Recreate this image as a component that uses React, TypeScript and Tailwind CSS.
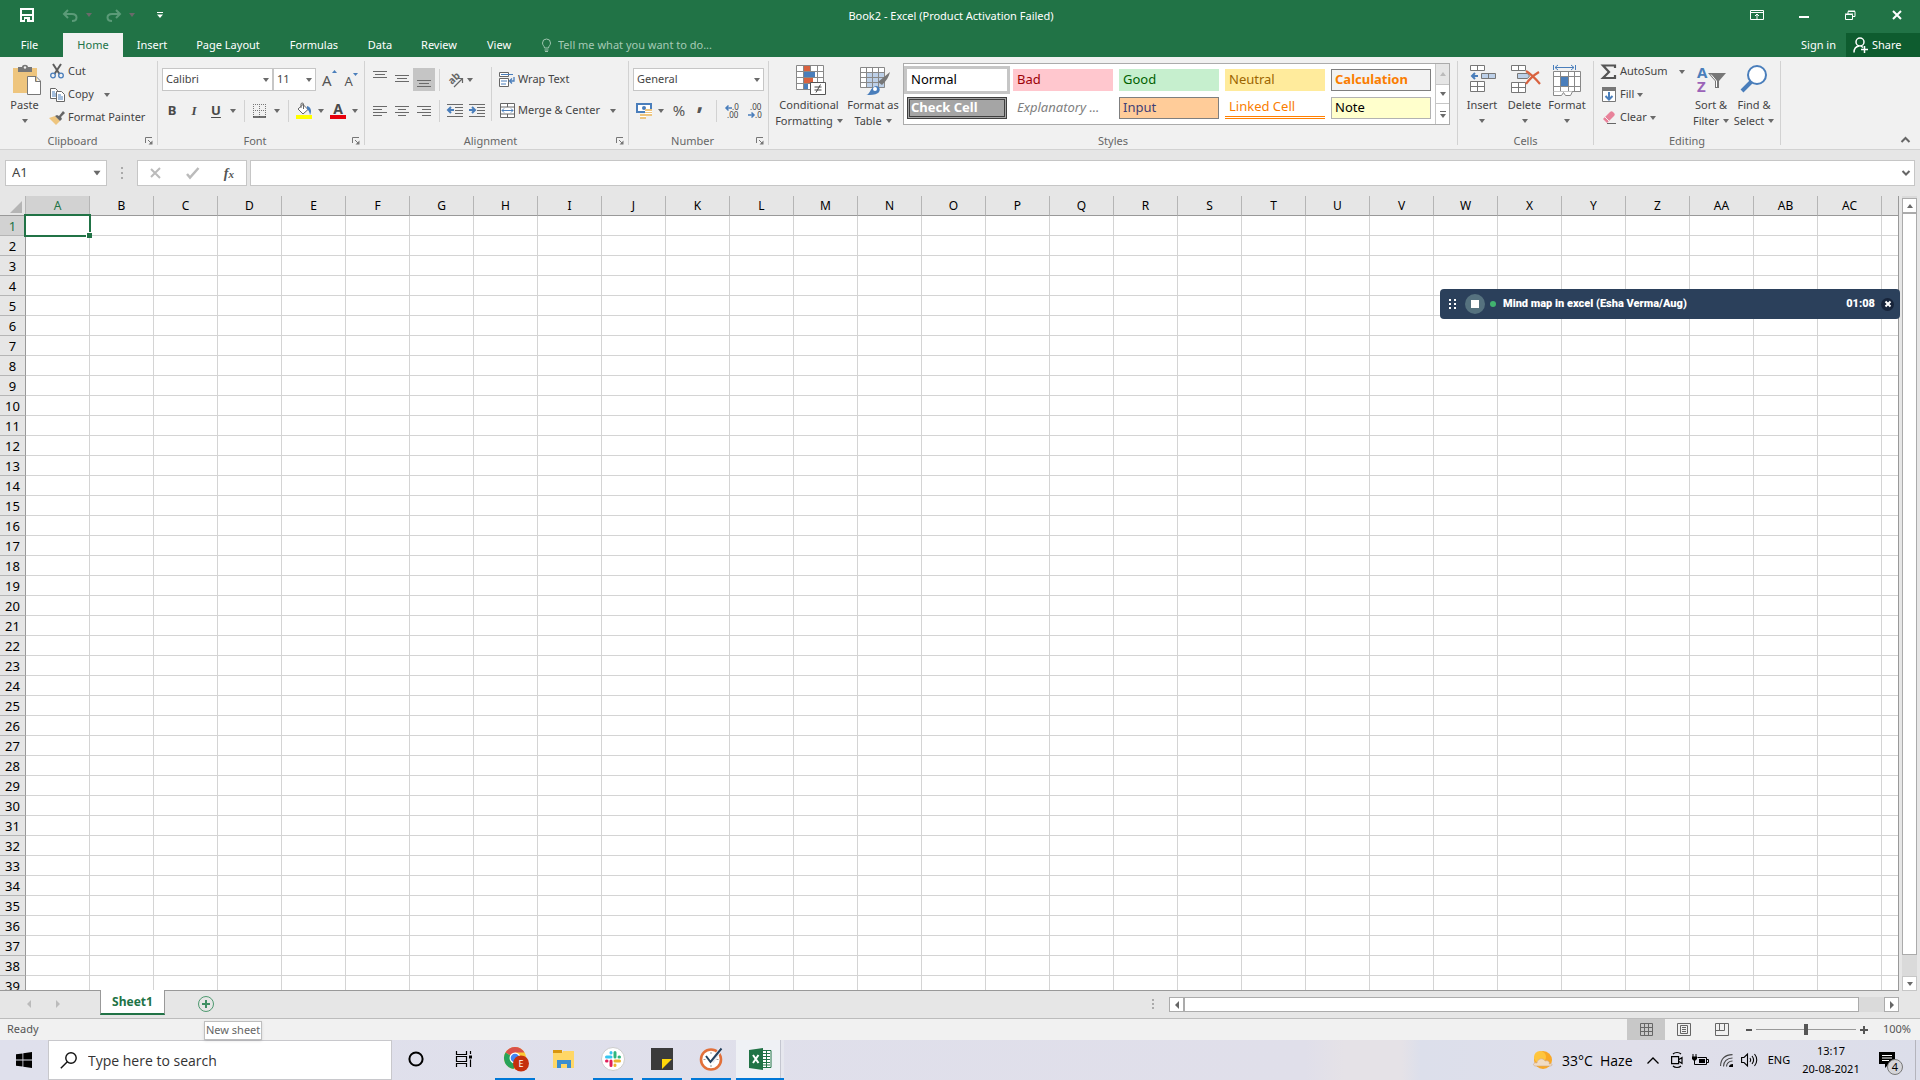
import { ReactNode } from "react";
import { clsx } from "clsx";

const columns = [..."ABCDEFGHIJKLMNOPQRSTUVWXYZ", "AA", "AB", "AC", "AD"];
const rows = Array.from({ length: 39 }, (_, i) => i + 1);

const tabs = [
  { name: "Insert", width: "w-[58px]" },
  { name: "Page Layout", width: "w-[94px]" },
  { name: "Formulas", width: "w-[78px]" },
  { name: "Data", width: "w-[54px]" },
  { name: "Review", width: "w-16" },
  { name: "View", width: "w-14" },
];

const cellStyles = [
  { name: "Normal", style: "px-1 bg-white text-black outline-3 outline-[#c6c6c6]" },
  { name: "Bad", style: "px-1 bg-[#ffc7ce] text-[#9c0006]" },
  { name: "Good", style: "px-1 bg-[#c6efce] text-[#006100]" },
  { name: "Neutral", style: "px-1 bg-[#ffeb9c] text-[#9c6500]" },
  { name: "Calculation", style: "px-[3px] border border-[#7f7f7f] bg-[#f2f2f2] font-bold text-[#fa7d00]" },
  { name: "Check Cell", style: "px-px border-3 border-double border-[#3f3f3f] bg-[#a5a5a5] font-bold text-white" },
  { name: "Explanatory ...", style: "px-1 bg-white text-[#7f7f7f] italic" },
  { name: "Input", style: "px-[3px] border border-[#7f7f7f] bg-[#ffcc99] text-[#3f3f76]" },
  { name: "Linked Cell", style: "px-1 border-b-3 border-double border-[#ff8001] bg-white text-[#fa7d00]" },
  { name: "Note", style: "px-[3px] border border-[#b2b2b2] bg-[#ffffcc] text-black" },
];

function Caret({ className = "" }: { className?: string }) {
  return (
    <svg width="6" height="4" viewBox="0 0 6 4" className={clsx("shrink-0 fill-[#6a6a6a]", className)}>
      <path d="M0 0h6L3 4z" />
    </svg>
  );
}

function Icon({ w = 16, h = 16, children, className }: { w?: number; h?: number; children: ReactNode; className?: string }) {
  return (
    <svg width={w} height={h} viewBox={`0 0 ${w} ${h}`} fill="none" className={clsx("shrink-0 overflow-visible", className)}>
      {children}
    </svg>
  );
}

function Divider({ className = "h-[22px]" }: { className?: string }) {
  return <div className={clsx("w-px shrink-0 bg-[#d2d2d2]", className)} />;
}

function Group({ label, launcher, width, children }: { label: string; launcher?: boolean; width: string; children: ReactNode }) {
  return (
    <section className={clsx("flex shrink-0", width)}>
      <div className="flex min-w-0 flex-1 flex-col">
        <div className="flex h-[76px]">{children}</div>
        <div className="flex h-4 items-center">
          <span className="flex-1 text-center text-[#666]">{label}</span>
          {launcher && (
            <button aria-label={`${label} settings`} className="mr-1">
              <Icon w={8} h={8}>
                <path d="M.5 6V.5H7M3 3l3.500 3.500" stroke="#777" />
                <path d="M7.500 3.500v4h-4z" fill="#777" />
              </Icon>
            </button>
          )}
        </div>
      </div>
      <Divider className="mt-1 h-[84px]" />
    </section>
  );
}

function BigButton({ icon, lines, width, caretBelow }: { icon: ReactNode; lines: string[]; width: string; caretBelow?: boolean }) {
  return (
    <button className={clsx("flex shrink-0 flex-col items-center pt-2", width)}>
      <span className="flex h-8 items-start justify-center">{icon}</span>
      <span className="h-4 leading-4 whitespace-nowrap">{lines[0]}</span>
      {caretBelow ? (
        <Caret className="mt-[6px]" />
      ) : (
        <span className="flex h-4 items-center gap-1 leading-4 whitespace-nowrap">
          {lines[1]}
          <Caret />
        </span>
      )}
    </button>
  );
}

function SmallButton({ icon, label, caret }: { icon: ReactNode; label: string; caret?: string }) {
  return (
    <button className="flex h-[23px] items-center whitespace-nowrap">
      <span className="mr-[3px] flex w-4 justify-center">{icon}</span>
      {label}
      {caret && <Caret className={caret} />}
    </button>
  );
}

// horizontal bars used by every alignment icon: [x, y, width]
function Bars({ lines, h = 14 }: { lines: number[][]; h?: number }) {
  return (
    <Icon w={14} h={h}>
      {lines.map(([x, y, w]) => (
        <rect key={y} x={x} y={y} width={w} height="1" fill="#6a6a6a" />
      ))}
    </Icon>
  );
}

function TitleBar() {
  return (
    <header className="flex h-[33px] items-center bg-[#217346] text-white">
      <div className="flex flex-1 items-center">
        <button aria-label="Save" className="ml-5 mt-[-3px]">
          <Icon w={14} h={14}>
            <path d="M1 1h12v12H1z" stroke="#fff" strokeWidth="2" />
            <path d="M2 6h10v2H2zM4 9h6v4H4z" fill="#fff" />
            <path d="M5 11h2v3H5z" fill="#217346" />
          </Icon>
        </button>
        <button aria-label="Undo" className="mt-[-3px] ml-[29px] flex items-center">
          <Icon w={15} h={13}>
            <path d="M5 1L1 5l4 4M1.500 5H9c6 0 6 7 0 7" stroke="#5b9b78" strokeWidth="2" />
          </Icon>
          <Caret className="ml-2 fill-[#5b9b78]" />
        </button>
        <button aria-label="Redo" className="mt-[-3px] ml-[14px] flex items-center">
          <Icon w={15} h={13}>
            <path d="M10 1l4 4-4 4M13.500 5H6c-6 0-6 7 0 7" stroke="#5b9b78" strokeWidth="2" />
          </Icon>
          <Caret className="ml-2 fill-[#5b9b78]" />
        </button>
        <button aria-label="Customize Quick Access Toolbar" className="mt-[-3px] ml-[22px]">
          <Icon w={6} h={6}>
            <path d="M0 0h6v1H0zM0 2.500h6L3 6z" fill="#fff" />
          </Icon>
        </button>
      </div>
      <h1 className="whitespace-nowrap">Book2 - Excel (Product Activation Failed)</h1>
      <div className="flex flex-1 items-center justify-end pr-[18px] pb-1">
        <button aria-label="Ribbon display options" className="mr-[35px]">
          <Icon w={14} h={10}>
            <path d="M.5.5h13v9H.5zM1 2.500h12M7 9V4M5 6l2-2 2 2" stroke="#fff" />
          </Icon>
        </button>
        <button aria-label="Minimize" className="mt-1 mr-9">
          <Icon w={10} h={2}><path d="M0 0h10v2H0z" fill="#fff" /></Icon>
        </button>
        <button aria-label="Restore" className="mr-9">
          <Icon w={11} h={10}>
            <path d="M.5 4.500h7v5h-7zM3 4V1.500h7v5H8M3 1h7M0 4h8" stroke="#fff" />
          </Icon>
        </button>
        <button aria-label="Close">
          <Icon w={10} h={10}><path d="M1 1l8 8M9 1L1 9" stroke="#fff" strokeWidth="2" /></Icon>
        </button>
      </div>
    </header>
  );
}

function TabBar() {
  return (
    <nav className="flex h-6 items-stretch bg-[#217346] text-white">
      <button className="w-[63px] pr-1">File</button>
      <button className="w-[60px] bg-[#f1f1f1] text-[#217346]">Home</button>
      {tabs.map((tab) => (
        <button key={tab.name} className={clsx("whitespace-nowrap", tab.width)}>{tab.name}</button>
      ))}
      <label className="ml-[14px] flex flex-1 items-center gap-[6px]">
        <Icon w={11} h={14}>
          <path d="M3.500 10c0-2-2-2.500-2-5a4 4 0 018 0c0 2.500-2 3-2 5zM3.500 12h4M4 13.500h3" stroke="#9fc6b0" />
        </Icon>
        <input
          aria-label="Tell me what you want to do"
          placeholder="Tell me what you want to do..."
          className="w-60 bg-transparent outline-none placeholder:text-[#a5cab5]"
        />
      </label>
      <button className="mr-[10px]">Sign in</button>
      <button className="flex w-[74px] items-center bg-[#0e5c2f] pl-[7px]">
        <Icon w={16} h={16} className="mr-[3px]">
          <circle cx="7" cy="5" r="4" stroke="#fff" strokeWidth="1.500" />
          <path d="M1 15.500c0-4 2-6 5-6.500M8 9l2 1.500M8 12.500h7M11.500 9v7" stroke="#fff" strokeWidth="1.500" />
        </Icon>
        Share
      </button>
    </nav>
  );
}

function ClipboardGroup() {
  return (
    <Group label="Clipboard" launcher width="w-[158px]">
      <BigButton
        width="ml-px w-[47px]"
        lines={["Paste"]}
        caretBelow
        icon={
          <Icon w={28} h={30} className="ml-1">
            <path d="M0 3h24v25H0z" fill="#eec57e" />
            <path d="M5 2h4c0-3 6-3 6 0h4v5H5z" fill="#777" />
            <circle cx="12" cy="2.500" r="1.200" fill="#f1f1f1" />
            <path d="M14.500 11.500H23l4.500 4.500v13.500h-13zM22.500 12v4.500H27" fill="#fff" stroke="#777" />
          </Icon>
        }
      />
      <div className="flex flex-col pt-[3px] pl-px">
        <SmallButton
          label="Cut"
          icon={
            <Icon w={14} h={15}>
              <path d="M3 0l6.500 10M11 0L4.500 10" stroke="#5e5e5e" strokeWidth="2" />
              <circle cx="3" cy="11.500" r="2.300" stroke="#4a7ebb" strokeWidth="1.300" />
              <circle cx="11" cy="11.500" r="2.300" stroke="#4a7ebb" strokeWidth="1.300" />
            </Icon>
          }
        />
        <SmallButton
          label="Copy"
          caret="ml-[10px]"
          icon={
            <Icon w={15} h={14}>
              <path d="M.5.5h5l2 2v8h-7z" fill="#fff" stroke="#666" />
              <path d="M2 4h3M2 6h4M2 8h4" stroke="#4a7ebb" />
              <path d="M6.500 3.500h5l3 3v7h-8z" fill="#fff" stroke="#666" />
              <path d="M8 7h3M8 9h5M8 11h5" stroke="#4a7ebb" />
            </Icon>
          }
        />
        <SmallButton
          label="Format Painter"
          icon={
            <Icon w={16} h={14}>
              <path d="M0 7l6-2 5 5-4 4z" fill="#eec57e" />
              <path d="M6 5l2-1 2 1 4-5 2 2-4 4 1 2-2 2z" fill="#666" />
            </Icon>
          }
        />
      </div>
    </Group>
  );
}

function FontGroup() {
  return (
    <Group label="Font" launcher width="w-[207px]">
      <div className="flex flex-1 flex-col pt-[11px] pl-1">
        <div className="flex h-[23px] items-center">
          <button className="flex h-[23px] w-[111px] items-center justify-between border border-[#c6c6c6] bg-white pr-[3px] pl-[3px]">
            Calibri <Caret />
          </button>
          <button className="flex h-[23px] w-[43px] items-center justify-between border border-[#c6c6c6] bg-white pr-[3px] pl-[3px]">
            11 <Caret />
          </button>
          <button aria-label="Increase font size" className="ml-[6px] flex text-[15px] leading-5 text-[#555]">
            A<Icon w={5} h={3}><path d="M0 3h5L2.500 0z" fill="#4a7ebb" /></Icon>
          </button>
          <button aria-label="Decrease font size" className="ml-2 flex pt-[2px] text-[13px] leading-4 text-[#555]">
            A<Icon w={5} h={3}><path d="M0 0h5L2.500 3z" fill="#4a7ebb" /></Icon>
          </button>
        </div>
        <div className="mt-2 flex h-[23px] items-center text-[13px] text-[#4a4a4a]">
          <button className="w-5 font-bold">B</button>
          <button className="w-6 font-['Liberation_Serif'] font-bold italic">I</button>
          <button className="w-5 font-bold underline underline-offset-2">U</button>
          <Caret className="ml-1" />
          <Divider className="ml-2 h-[22px]" />
          <button aria-label="Borders" className="ml-2 flex items-center">
            <Icon w={14} h={14}>
              <path d="M0 .5h13M0 6.500h13M.5 0v13M6.500 0v13M12.500 0v13" stroke="#777" strokeDasharray="1 1" />
              <path d="M0 13h13" stroke="#444" strokeWidth="1.500" />
            </Icon>
            <Caret className="ml-[7px]" />
          </button>
          <Divider className="ml-2 h-[22px]" />
          <button aria-label="Fill color" className="ml-[7px] flex items-center">
            <Icon w={16} h={16}>
              <path d="M2 6l5-4.500 5 5L7 11z" fill="#fff" stroke="#666" />
              <path d="M5 5V1c0-1.300 2.500-1.300 2.500 0v5" stroke="#666" />
              <path d="M11 3c4 1 5 5 3 9-.5-3-1.500-5-3-6z" fill="#4a7ebb" />
              <path d="M0 12h16v4H0z" fill="#ff0" />
            </Icon>
            <Caret className="ml-[6px]" />
          </button>
          <button aria-label="Font color" className="ml-[6px] flex items-center">
            <span className="flex w-4 flex-col items-center text-[14px] leading-3 font-bold">
              A<span className="h-1 w-4 bg-red-600" />
            </span>
            <Caret className="ml-[6px]" />
          </button>
        </div>
      </div>
    </Group>
  );
}

function AlignmentGroup() {
  return (
    <Group label="Alignment" launcher width="w-[264px]">
      <div className="flex flex-col pt-[11px] pl-1">
        <div className="flex h-[23px] items-center">
          <button aria-label="Top align" className="flex h-full w-[22px] justify-center pt-[3px]">
            <Bars lines={[[0, 0, 14], [2, 3, 10], [0, 6, 14]]} />
          </button>
          <button aria-label="Middle align" className="flex h-full w-[22px] justify-center pt-[7px]">
            <Bars lines={[[0, 0, 14], [2, 3, 10], [0, 6, 14]]} />
          </button>
          <button aria-label="Bottom align" className="flex h-full w-[22px] justify-center bg-[#c5c5c5] pt-3">
            <Bars h={8} lines={[[0, 0, 14], [2, 3, 10], [0, 6, 14]]} />
          </button>
          <Divider className="ml-1 h-[22px]" />
          <button aria-label="Orientation" className="ml-[7px] flex items-center">
            <Icon w={16} h={16}>
              <text transform="translate(5 13) rotate(-45)" fontSize="10" fontWeight="bold" fill="#666">ab</text>
              <path d="M7 15l8-8M11 6.500h4.500V11" stroke="#666" strokeWidth="1.200" />
            </Icon>
            <Caret className="ml-1" />
          </button>
        </div>
        <div className="mt-2 flex h-[23px] items-center">
          <button aria-label="Align left" className="flex w-[22px] justify-center">
            <Bars h={10} lines={[[0, 0, 14], [0, 3, 9], [0, 6, 14], [0, 9, 9]]} />
          </button>
          <button aria-label="Center" className="flex w-[22px] justify-center">
            <Bars h={10} lines={[[0, 0, 14], [3, 3, 8], [0, 6, 14], [3, 9, 8]]} />
          </button>
          <button aria-label="Align right" className="flex w-[22px] justify-center">
            <Bars h={10} lines={[[0, 0, 14], [5, 3, 9], [0, 6, 14], [5, 9, 9]]} />
          </button>
          <Divider className="ml-1 h-[22px]" />
          <button aria-label="Decrease indent" className="ml-[7px]">
            <Icon w={16} h={13}>
              <path d="M0 .5h16M8 3.500h8M8 6.500h8M8 9.500h8M0 12.500h16" stroke="#6a6a6a" />
              <path d="M7 6H2M4 3L1 6l3 3" stroke="#4a7ebb" strokeWidth="2" />
            </Icon>
          </button>
          <button aria-label="Increase indent" className="ml-[6px]">
            <Icon w={16} h={13}>
              <path d="M0 .5h16M8 3.500h8M8 6.500h8M8 9.500h8M0 12.500h16" stroke="#6a6a6a" />
              <path d="M0 6h5M3 3l3 3-3 3" stroke="#4a7ebb" strokeWidth="2" />
            </Icon>
          </button>
        </div>
      </div>
      <Divider className="mt-[10px] ml-[6px] h-[54px]" />
      <div className="flex flex-col gap-2 pt-[11px] pl-[7px]">
        <SmallButton
          label="Wrap Text"
          icon={
            <Icon w={16} h={16}>
              <path d="M.5.5h9v4h-9zM.5 6.500h9v8h-9z" fill="#fff" stroke="#666" />
              <path d="M2 2.500h12M2 9h6M2 12h5" stroke="#4a7ebb" />
              <path d="M15 5v4h-4M13 6.500L10.500 9l2.500 2.500" stroke="#4a7ebb" strokeWidth="1.300" />
            </Icon>
          }
        />
        <SmallButton
          label="Merge & Center"
          caret="ml-[10px]"
          icon={
            <Icon w={15} h={15}>
              <path d="M.5.5h14v14H.5zM.5 4h14M.5 11h14M7.500.5V4M7.500 11v3.500" fill="#fff" stroke="#666" />
              <path d="M2 7.500h11M4 5.500l-2 2 2 2M11 5.500l2 2-2 2" stroke="#4a7ebb" />
            </Icon>
          }
        />
      </div>
    </Group>
  );
}

function NumberGroup() {
  return (
    <Group label="Number" launcher width="w-[140px]">
      <div className="flex flex-1 flex-col pt-[11px] pl-1">
        <button className="flex h-[23px] w-[131px] items-center justify-between border border-[#c6c6c6] bg-white pr-[3px] pl-[3px]">
          General <Caret />
        </button>
        <div className="mt-2 flex h-[23px] items-center text-[#555]">
          <button aria-label="Accounting number format" className="ml-[3px] flex items-center">
            <Icon w={16} h={16}>
              <path d="M1 1h14v8H1z" fill="#fff" stroke="#4a7ebb" strokeWidth="2" />
              <circle cx="8" cy="5" r="2" fill="#4a7ebb" />
              <path d="M9 6h7v7H9zM4 11h6v5H4z" fill="#eec57e" />
              <path d="M9 8.500h7M9 10.500h7M4 13.500h6" stroke="#fff" />
            </Icon>
            <Caret className="ml-[6px]" />
          </button>
          <button aria-label="Percent style" className="ml-2 w-[14px] text-[15px]">%</button>
          <button aria-label="Comma style" className="ml-2 w-3 pb-5 text-[24px] leading-3 font-bold">,</button>
          <Divider className="ml-[10px] h-[22px]" />
          <button aria-label="Increase decimal" className="ml-2">
            <Icon w={15} h={14}>
              <text x="7" y="6" fontSize="8" fill="#444">.0</text>
              <text x="2" y="14" fontSize="8" fill="#444">.00</text>
              <path d="M7 4H1M3.500 1.500L1 4l2.500 2.500" stroke="#4a7ebb" strokeWidth="1.500" />
            </Icon>
          </button>
          <button aria-label="Decrease decimal" className="ml-2">
            <Icon w={15} h={14}>
              <text x="2" y="6" fontSize="8" fill="#444">.00</text>
              <text x="7" y="14" fontSize="8" fill="#444">.0</text>
              <path d="M0 11h6M3.500 8.500L6 11l-2.500 2.500" stroke="#4a7ebb" strokeWidth="1.500" />
            </Icon>
          </button>
        </div>
      </div>
    </Group>
  );
}

function StylesGroup() {
  return (
    <Group label="Styles" width="w-[689px]">
      <BigButton
        width="ml-1 w-[72px]"
        lines={["Conditional", "Formatting"]}
        icon={
          <Icon w={30} h={30} className="ml-1">
            <path d="M.5.5h27v24H.5zM0 6.500h27M0 12.500h27M0 18.500h27M7.500.5v24M14.500.5v24M21.500.5v24" fill="#fff" stroke="#888" />
            <path d="M8 1h6v5H8zM8 13h9v5H8z" fill="#d9623f" />
            <path d="M8 7h11v5H8zM8 19h4v5H8z" fill="#4a7ebb" />
            <path d="M14.500 17.500h15v12h-15z" fill="#fff" stroke="#555" />
            <path d="M18.500 22h7M18.500 25h7M24.500 19.500l-4.500 8" stroke="#444" />
          </Icon>
        }
      />
      <BigButton
        width="w-14"
        lines={["Format as", "Table"]}
        icon={
          <Icon w={30} h={30} className="ml-1">
            <path d="M.5 2.500h24v20H.5z" fill="#fff" />
            <path d="M7 8h18v15H7z" fill="#bdd0e8" />
            <path d="M.5 2.500h24v20H.5zM0 7.500h24M0 12.500h24M0 17.500h24M6.500 2.500v20M12.500 2.500v20M18.500 2.500v20" stroke="#888" />
            <path d="M30 7c-1 5-4 9-8 13l-4-3c4-3 8-7 12-10z" fill="#777" />
            <path d="M6 30c4 0 4-8 10-9 4 0 5 5 2 7-3 2-7 2-12 2z" fill="#4a7ebb" />
            <circle cx="15" cy="24" r="2" fill="#fff" />
          </Icon>
        }
      />
      <div className="mt-[6px] ml-[2px] flex h-[62px] border border-[#ababab] bg-white">
        <div className="grid grid-cols-5 content-start gap-[6px] pt-[5px] pr-1 pl-[3px]">
          {cellStyles.map((cell) => (
            <button key={cell.name} className={clsx("flex h-[22px] w-[100px] items-center text-[13px]", cell.style)}>
              {cell.name}
            </button>
          ))}
        </div>
        <div className="flex w-[14px] flex-col border-l border-[#c6c6c6]">
          <button aria-label="Scroll up" className="flex h-5 items-center justify-center bg-[#e6e6e6]">
            <Caret className="rotate-180 fill-[#bbb]" />
          </button>
          <button aria-label="Scroll down" className="flex h-5 items-center justify-center border-y border-[#c6c6c6]">
            <Caret />
          </button>
          <button aria-label="More styles" className="flex flex-1 flex-col items-center justify-center gap-[2px]">
            <span className="h-px w-[6px] bg-[#6a6a6a]" />
            <Caret />
          </button>
        </div>
      </div>
    </Group>
  );
}

function CellsGroup() {
  return (
    <Group label="Cells" width="w-[136px]">
      <BigButton
        width="ml-1 w-10"
        lines={["Insert"]}
        caretBelow
        icon={
          <Icon w={27} h={28} className="ml-[2px]">
            <path d="M.5.5h14v5H.5zM7.500.5v5M.5 16.500h14v10H.5zM7.500 16.500v10M.5 21.500h14" fill="#fff" stroke="#777" />
            <path d="M11.500 8.500h14v5h-14zM18.500 8.500v5" fill="#bdd0e8" stroke="#777" />
            <path d="M8 11H2M5 8l-3 3 3 3" stroke="#4a7ebb" strokeWidth="2" />
          </Icon>
        }
      />
      <BigButton
        width="ml-[1px] w-[43px]"
        lines={["Delete"]}
        caretBelow
        icon={
          <Icon w={30} h={28} className="ml-[2px]">
            <path d="M.5.5h14v5H.5zM7.500.5v5M.5 17.500h14v10H.5zM7.500 17.500v10M.5 22.500h14" fill="#fff" stroke="#777" />
            <path d="M6.500 8.500h10l2 2.500-2 2.500h-10z" fill="#bdd0e8" stroke="#777" />
            <path d="M15 6c5 3 9 7 14 13M28 7c-5 3-9 6-13 12" stroke="#d9623f" strokeWidth="2.200" />
          </Icon>
        }
      />
      <BigButton
        width="w-[42px]"
        lines={["Format"]}
        caretBelow
        icon={
          <Icon w={28} h={31}>
            <path d="M.5 0v5M22.500 0v5M2 2.500h19M5 0L2 2.500 5 5M18 0l3 2.500L18 5" stroke="#4a7ebb" />
            <path d="M.5 6.500h27v20H.5zM0 11.500h27M0 21.500h27M7.500 6.500v20M15.500 6.500v20M21.500 6.500v20" fill="#fff" stroke="#888" />
            <path d="M.5 26.500v4h8l2-3 2 3h5l2-4" fill="#fff" stroke="#888" />
            <path d="M8 12h7v9H8z" fill="#4a7ebb" />
          </Icon>
        }
      />
    </Group>
  );
}

function EditingGroup() {
  return (
    <Group label="Editing" width="w-[187px]">
      <div className="flex w-[97px] flex-col pt-[3px] pl-[7px]">
        <SmallButton
          label="AutoSum"
          caret="ml-[11px]"
          icon={<Icon w={16} h={16}><path d="M14 4V1.500H2L8 8l-6 6h12v-3" stroke="#555" strokeWidth="2.200" /></Icon>}
        />
        <SmallButton
          label="Fill"
          caret="ml-[3px]"
          icon={
            <Icon w={14} h={15}>
              <path d="M.5.5h13v14H.5z" fill="#fff" stroke="#777" />
              <path d="M0 0h14v4H0z" fill="#777" />
              <path d="M7 5v7M3.500 9L7 12.500 10.500 9" stroke="#4a7ebb" strokeWidth="2" />
            </Icon>
          }
        />
        <SmallButton
          label="Clear"
          caret="ml-[3px]"
          icon={
            <Icon w={14} h={13}>
              <path d="M1 8l7-7c1-1 2-1 3 0l1 1c1 1 1 2 0 3l-7 7z" fill="#e8829a" />
              <path d="M3 6l4 4" stroke="#f1f1f1" />
              <path d="M5 12.500h9" stroke="#666" />
            </Icon>
          }
        />
      </div>
      <BigButton
        width="w-10"
        lines={["Sort &", "Filter"]}
        icon={
          <Icon w={30} h={28}>
            <text x="1" y="13" fontSize="15" fontWeight="bold" fill="#4a7ebb">A</text>
            <text x="1" y="27" fontSize="15" fontWeight="bold" fill="#9b63b8">Z</text>
            <path d="M12 8h18l-7 8v7h-4v-7z" fill="#777" />
            <path d="M15 9.500l5.500 6.500V22" stroke="#fff" />
          </Icon>
        }
      />
      <BigButton
        width="ml-[3px] w-10"
        lines={["Find &", "Select"]}
        icon={
          <Icon w={28} h={28}>
            <path d="M2 26l9-9" stroke="#4a7ebb" strokeWidth="4" />
            <circle cx="17" cy="10" r="9" fill="#fff" stroke="#4a7ebb" strokeWidth="2" />
          </Icon>
        }
      />
    </Group>
  );
}

function FormulaBar() {
  return (
    <div className="flex h-[46px] items-start bg-[#e6e6e6] pt-[10px] pr-[5px] pl-[5px]">
      <div className="flex h-[26px] w-[102px] items-center justify-between border border-[#c6c6c6] bg-white pr-[6px] pl-[6px]">
        <input aria-label="Name Box" defaultValue="A1" className="w-16 text-[13px] outline-none" />
        <Caret className="scale-125" />
      </div>
      <Icon w={2} h={12} className="mt-[7px] ml-[14px]">
        <path d="M0 1h2M0 6h2M0 11h2" stroke="#aaa" strokeWidth="2" />
      </Icon>
      <div className="ml-[14px] flex h-[26px] w-[110px] items-center justify-between border border-[#c6c6c6] bg-white pr-3 pl-3">
        <button aria-label="Cancel">
          <Icon w={12} h={12}><path d="M1 2l9 9M10 1l-9 9" stroke="#bbb" strokeWidth="2" /></Icon>
        </button>
        <button aria-label="Enter">
          <Icon w={14} h={12}><path d="M1 7l3 3.500L12.500 1" stroke="#bbb" strokeWidth="2.500" /></Icon>
        </button>
        <button aria-label="Insert function" className="font-['Liberation_Serif'] text-[14px] font-bold text-[#555] italic">
          f<span className="text-[11px]">x</span>
        </button>
      </div>
      <div className="ml-[3px] flex h-[26px] flex-1 items-center border border-[#c6c6c6] bg-white pr-1">
        <input aria-label="Formula" className="h-full flex-1 outline-none" />
        <button aria-label="Expand formula bar">
          <Icon w={8} h={6}><path d="M.5 1L4 4.500 7.500 1" stroke="#666" strokeWidth="2" /></Icon>
        </button>
      </div>
    </div>
  );
}

function Sheet() {
  return (
    <main className="flex min-h-0 flex-1 bg-[#e6e6e6]">
      <div className="relative min-w-0 flex-1 overflow-hidden border-r border-b border-[#999]">
        <table className="w-[1946px] table-fixed border-separate border-spacing-0 text-[13px] text-black">
          <colgroup>
            <col className="w-[26px]" />
            {columns.map((column) => <col key={column} className="w-16" />)}
          </colgroup>
          <thead>
            <tr className="h-5 bg-[#e6e6e6]">
              <th className="border-r border-b border-[#999] border-r-[#b5b5b5] p-0">
                <Icon w={12} h={12} className="mt-[2px] ml-[10px]"><path d="M12 0v12H0z" fill="#b5b5b5" /></Icon>
              </th>
              {columns.map((column) => (
                <th
                  key={column}
                  scope="col"
                  className={clsx(
                    "border-r border-b border-[#999] border-r-[#b5b5b5] p-0 text-[12px] leading-[19px] font-normal",
                    column === "A" && "bg-[#d2d2d2] text-[#217346]"
                  )}
                >
                  {column}
                </th>
              ))}
            </tr>
          </thead>
          <tbody>
            {rows.map((row) => (
              <tr key={row} className="h-5">
                <th
                  scope="row"
                  className={clsx(
                    "border-r border-b border-[#999] border-b-[#b5b5b5] p-0 pt-px leading-[18px] font-normal",
                    row === 1 ? "bg-[#d2d2d2] text-[#217346]" : "bg-[#e6e6e6]"
                  )}
                >
                  {row}
                </th>
                {columns.map((column) => {
                  const selected = row === 1 && column === "A";
                  return (
                    <td key={column} className={clsx("border-r border-b border-[#d4d4d4] bg-white p-0", selected && "relative")}>
                      {selected && (
                        <div className="absolute -inset-[2px] border-2 border-[#217346]">
                          <span className="absolute -right-[3px] -bottom-[3px] size-[6px] border-t border-l border-white bg-[#217346]" />
                        </div>
                      )}
                    </td>
                  );
                })}
              </tr>
            ))}
          </tbody>
        </table>
      </div>
      <div className="mr-[3px] ml-[3px] flex w-[15px] flex-col bg-[#dadada] pt-[2px]">
        <button aria-label="Scroll up" className="flex h-[15px] items-center justify-center border border-[#ababab] bg-white">
          <Caret className="rotate-180" />
        </button>
        <div className="flex flex-1 flex-col">
          <div className="h-[742px] border border-[#ababab] bg-white" />
        </div>
        <button aria-label="Scroll down" className="flex h-[15px] items-center justify-center border border-[#c6c6c6] bg-white">
          <Caret />
        </button>
      </div>
    </main>
  );
}

function RecorderBar() {
  return (
    <aside className="absolute top-[289px] right-5 flex h-[30px] w-[460px] items-center rounded-[4px] bg-[#2b405b] pr-[6px] pl-[9px] font-['Roboto',sans-serif] text-[11px] font-black text-white">
      <Icon w={7} h={11}>
        <path d="M0 1h2M5 1h2M0 5h2M5 5h2M0 9h2M5 9h2" stroke="#fff" strokeWidth="2" />
      </Icon>
      <button aria-label="Stop" className="ml-[9px] flex size-5 items-center justify-center rounded-full bg-[#56727f]">
        <span className="size-2 bg-white" />
      </button>
      <span className="ml-[5px] size-[6px] rounded-full bg-[#41b36f]" />
      <span className="ml-[7px] flex-1 pt-px">Mind map in excel (Esha Verma/Aug)</span>
      <time className="pt-px">01:08</time>
      <button aria-label="Close recorder" className="ml-[6px] flex size-[13px] items-center justify-center rounded-full bg-[#17243a]">
        <Icon w={6} h={6}><path d="M.5.5l5 5M5.500.5l-5 5" stroke="#fff" strokeWidth="2" /></Icon>
      </button>
    </aside>
  );
}

function SheetTabs() {
  return (
    <div className="flex h-7 items-start border-b border-[#bcbcbc] bg-[#e6e6e6]">
      <button aria-label="Previous sheet" className="mt-[9px] ml-[27px]">
        <Icon w={4} h={8}><path d="M4 0v8L0 4z" fill="#bbb" /></Icon>
      </button>
      <button aria-label="Next sheet" className="mt-[9px] ml-[25px]">
        <Icon w={4} h={8}><path d="M0 0v8l4-4z" fill="#bbb" /></Icon>
      </button>
      <button className="z-10 -mt-px ml-10 h-[25px] w-[65px] border-x border-b-2 border-x-[#999] border-b-[#217346] bg-white pt-px text-[12px] font-bold text-[#217346]">
        Sheet1
      </button>
      <button aria-label="New sheet" className="mt-[5px] ml-[33px]">
        <Icon w={16} h={16}>
          <circle cx="8" cy="8" r="7.500" stroke="#4f9a70" />
          <path d="M8 4v8M4 8h8" stroke="#3f8f63" strokeWidth="2" />
        </Icon>
      </button>
      <div className="flex-1" />
      <Icon w={2} h={10} className="mt-2"><path d="M0 1h2M0 5h2M0 9h2" stroke="#aaa" strokeWidth="2" /></Icon>
      <div className="mt-[6px] mr-[21px] ml-[15px] flex h-[15px] w-[38%] bg-[#dadada]">
        <button aria-label="Scroll left" className="flex w-[15px] items-center justify-center border border-[#ababab] bg-white">
          <Icon w={4} h={8}><path d="M4 0v8L0 4z" fill="#666" /></Icon>
        </button>
        <div className="flex-1 border border-[#ababab] bg-white" />
        <button aria-label="Scroll right" className="ml-[25px] flex w-[15px] items-center justify-center border border-[#ababab] bg-white">
          <Icon w={4} h={8}><path d="M0 0v8l4-4z" fill="#666" /></Icon>
        </button>
      </div>
    </div>
  );
}

function StatusBar() {
  return (
    <footer className="relative flex h-[21px] items-center bg-[#f1f1f1] text-[#555]">
      <span className="pl-[7px]">Ready</span>
      <div role="tooltip" className="absolute top-[2px] left-[204px] h-[19px] border border-[#bebebe] bg-white px-px leading-4 text-[#666] shadow">
        New sheet
      </div>
      <div className="flex-1" />
      <button aria-label="Normal view" className="flex h-full w-[38px] items-center justify-center bg-[#c8c8c8]">
        <Icon w={13} h={13}><path d="M.5.5h12v12H.5zM4.500 0v13M8.500 0v13M0 4.500h13M0 8.500h13" stroke="#666" /></Icon>
      </button>
      <button aria-label="Page layout view" className="flex w-[38px] justify-center">
        <Icon w={14} h={13}><path d="M.5.5h13v12H.5zM3.500 2.500h7v8h-7zM5 4.500h4M5 6.500h4M5 8.500h4" stroke="#666" /></Icon>
      </button>
      <button aria-label="Page break view" className="flex w-[38px] justify-center">
        <Icon w={14} h={13}><path d="M.5.5h13v12H.5zM4.500 0v7M9.500 0v7.500H.5" stroke="#666" /></Icon>
      </button>
      <button aria-label="Zoom out" className="ml-[5px]">
        <Icon w={6} h={2}><path d="M0 0h6v2H0z" fill="#555" /></Icon>
      </button>
      <input
        type="range"
        aria-label="Zoom"
        className="ml-1 h-[11px] w-[100px] appearance-none bg-[linear-gradient(#999,#999)] bg-[length:100%_1px] bg-center bg-no-repeat [&::-webkit-slider-thumb]:h-[11px] [&::-webkit-slider-thumb]:w-1 [&::-webkit-slider-thumb]:appearance-none [&::-webkit-slider-thumb]:bg-[#555]"
      />
      <button aria-label="Zoom in" className="ml-1">
        <Icon w={8} h={8}><path d="M4 0v8M0 4h8" stroke="#555" strokeWidth="2" /></Icon>
      </button>
      <span className="w-[52px] pr-[9px] text-right">100%</span>
    </footer>
  );
}

function TaskButton({ label, open, children }: { label: string; open?: boolean; children: ReactNode }) {
  return (
    <button
      aria-label={label}
      className={clsx("flex h-10 w-10 items-center justify-center border-b-2", open ? "border-[#0078d7]" : "border-transparent")}
    >
      {children}
    </button>
  );
}

function Taskbar() {
  return (
    <div className="flex h-10 items-center bg-[linear-gradient(90deg,#dfe0ec_0%,#e0dfea_68%,#e5e2e7_70%,#e5e2e7_73%,#dcdfeb_74%,#e0dfea_85%,#dcdeea_100%)] text-black">
      <button aria-label="Start" className="flex w-12 justify-center">
        <Icon w={16} h={16}>
          <path d="M0 2.300L6.500 1.400v6.200H0zM7.300 1.300L16 0v7.600H7.300zM0 8.400h6.500v6.200L0 13.700zM7.300 8.400H16V16l-8.700-1.300z" fill="#000" />
        </Icon>
      </button>
      <label className="flex h-10 w-[344px] items-center border border-[#c8c8cc] bg-white pl-[11px]">
        <Icon w={17} h={17}>
          <circle cx="11" cy="6" r="5.200" stroke="#111" strokeWidth="1.400" />
          <path d="M7.300 9.700L.8 16.200" stroke="#111" strokeWidth="1.400" />
        </Icon>
        <input
          aria-label="Search"
          placeholder="Type here to search"
          className="ml-[11px] w-64 font-['Open_Sans',sans-serif] text-[14px] outline-none placeholder:text-[#333]"
        />
      </label>
      <div className="ml-1 flex gap-2">
        <TaskButton label="Cortana">
          <Icon w={16} h={16}><circle cx="8" cy="8" r="6.600" stroke="#000" strokeWidth="2" /></Icon>
        </TaskButton>
        <TaskButton label="Task View">
          <Icon w={17} h={16}>
            <path d="M.5 0v3.500h10V0M.5 5.500h10v5H.5zM.5 16v-3.500h10V16M14.500 0v3M14.500 8.500V16" stroke="#000" strokeWidth="1.200" />
            <path d="M13 4.500h3v3h-3z" fill="#000" />
          </Icon>
        </TaskButton>
      </div>
      <div className="ml-[11px] flex gap-[9px]">
        <TaskButton label="Google Chrome" open>
          <Icon w={26} h={26} className="ml-1">
            <circle cx="11" cy="12" r="11" fill="#fbc934" />
            <path d="M11 12L1.500 6.500A11 11 0 0120.500 6.500H11z" fill="#d9504a" />
            <path d="M1.500 6.500a11 11 0 008 16.500L14 14z" fill="#27a35a" />
            <circle cx="11" cy="12" r="5.500" fill="#fff" />
            <circle cx="11" cy="12" r="4.300" fill="#4285f4" />
            <circle cx="17" cy="17.500" r="8" fill="#c5300d" />
            <text x="17" y="21" textAnchor="middle" fontSize="9" fill="#fff">E</text>
          </Icon>
        </TaskButton>
        <TaskButton label="File Explorer">
          <Icon w={22} h={19}>
            <path d="M0 0h9v4H0z" fill="#d9960f" />
            <path d="M0 3h9l1-2h11v17H0z" fill="#ffd766" />
            <path d="M4 10h14v8h-4v-4H8v4H4z" fill="#3c8ed0" />
          </Icon>
        </TaskButton>
        <TaskButton label="Slack" open>
          <Icon w={24} h={24}>
            <circle cx="12" cy="12" r="11.500" fill="#fff" stroke="#ccc" />
            <g strokeWidth="3" strokeLinecap="round">
              <path d="M10 5.500V6M5.500 10H10" stroke="#36c5f0" />
              <path d="M14 5.500V10M18.500 10H18" stroke="#2eb67d" />
              <path d="M14 14h4.500M14 18.500V18" stroke="#ecb22e" />
              <path d="M10 14v4.500M5.500 14H6" stroke="#e01e5a" />
            </g>
          </Icon>
        </TaskButton>
        <TaskButton label="Sticky Notes" open>
          <Icon w={22} h={22}>
            <path d="M0 0h22v22H0z" fill="#3b3b3b" />
            <path d="M11 11h10L11 21z" fill="#ffd80a" />
          </Icon>
        </TaskButton>
        <TaskButton label="Time tracker" open>
          <Icon w={24} h={24}>
            <circle cx="12" cy="12.500" r="10" fill="#fff" stroke="#e2703a" strokeWidth="2.600" />
            <path d="M12 5v2M12 18v2M4.500 12.500h2M17.500 12.500h2" stroke="#999" />
            <path d="M13 15L22 1.500" stroke="#e8eaf0" strokeWidth="4" />
            <path d="M7 9l4.500 6L22.500 1.500" stroke="#24405e" strokeWidth="2" />
          </Icon>
        </TaskButton>
      </div>
      <div className="ml-[5px] flex border-b-2 border-[#0078d7] bg-[linear-gradient(90deg,#eff1f5_44px,#c4c6d0_44px,#c4c6d0_45px,#e6e7ee_45px)] pr-1 pl-1">
        <button aria-label="Excel" className="flex h-[38px] w-10 items-center justify-center">
          <Icon w={23} h={22}>
            <path d="M12 2.500h10v17H12z" fill="#fff" stroke="#217346" />
            <path d="M13 5.500h8M13 8.500h8M13 11.500h8M13 14.500h8M13 17h8M17.500 3v16" stroke="#217346" />
            <path d="M0 2l14-2v22L0 20z" fill="#217346" />
            <path d="M4 7l5.500 8M9.500 7L4 15" stroke="#fff" strokeWidth="2" />
          </Icon>
        </button>
      </div>
      <div className="flex-1" />
      <button className="flex items-center text-left font-['Open_Sans',sans-serif] text-[14px]">
        <Icon w={20} h={18}>
          <circle cx="10" cy="9" r="9" fill="#f9a826" />
          <circle cx="7" cy="6" r="6" fill="#ffc53d" />
          <path d="M2 15c-3-1-1-4 2-3 0-4 6-6 8-2 4-1 5 2 4 3 4-1 4 2 1 2z" fill="#f1dcc4" stroke="#c9a88a" strokeWidth=".6" />
        </Icon>
        <span className="ml-[9px] w-[38px] whitespace-nowrap">33°C</span>
        <span className="w-[47px]">Haze</span>
      </button>
      <button aria-label="Show hidden icons">
        <Icon w={12} h={7}><path d="M.5 6.500L6 1l5.500 5.500" stroke="#000" strokeWidth="1.300" /></Icon>
      </button>
      <Icon w={12} h={16} className="ml-3">
        <path d="M.6 4.600h7v7h-7zM8 7.500l3-2v6l-3-2M2 2c2-2 6-2 8 0M2 14c2 2 6 2 8 0" stroke="#000" strokeWidth="1.200" />
      </Icon>
      <Icon w={17} h={12} className="ml-[9px]">
        <path d="M5.500 3.500h9v7h-9M15 5.500h1.500v3H15M1 0v3M4 0v3M2.500 6v4.500H6" stroke="#000" />
        <path d="M0 2.500h5V5L3.500 6.500h-2L0 5zM7 5h6v4H7z" fill="#000" />
      </Icon>
      <Icon w={13} h={13} className="ml-[11px]">
        <path d="M.6 12C.6 5 5 .6 12.500.6M3.500 12.500c0-5 3.500-8.500 9-8.500M6.500 12.500c0-3 2.500-5.500 6-5.500" stroke="#444" strokeWidth="1.100" />
        <path d="M9 13c0-2 1.500-3 4-3v3z" fill="#000" />
      </Icon>
      <Icon w={17} h={14} className="ml-2">
        <path d="M.6 4.500H3L6.500 1v12L3 9.500H.600zM9 5c1 1.300 1 2.700 0 4M11 3c2 2.500 2 5.500 0 8M13.500 1c3 3.500 3 8.500 0 12" stroke="#000" strokeWidth="1.100" />
      </Icon>
      <button className="ml-[9px] w-6">ENG</button>
      <time className="ml-[9px] w-[62px] text-center leading-[18px] whitespace-nowrap">
        13:17
        <br />
        20-08-2021
      </time>
      <button aria-label="Notifications" className="relative ml-[17px] h-[26px] w-[26px]">
        <Icon w={17} h={16}>
          <path d="M0 0h16v12h-6l-4 4v-4H0z" fill="#000" />
          <path d="M3 3.500h10M3 6h10M3 8.500h7" stroke="#fff" />
        </Icon>
        <span className="absolute top-3 left-2 flex size-4 items-center justify-center rounded-full border border-[#777] bg-[#d5d5d9] text-[11px]">4</span>
      </button>
      <div className="ml-[10px] h-10 w-[5px] border-l border-[#b4b4bc]" />
    </div>
  );
}

export default function App() {
  return (
    <div className="relative flex h-screen flex-col overflow-hidden font-['Noto_Sans','Open_Sans',sans-serif] text-[11px] text-[#444]">
      <TitleBar />
      <TabBar />
      <div className="flex h-[93px] items-start border-b border-[#d2d2d2] bg-[#f1f1f1]">
        <ClipboardGroup />
        <FontGroup />
        <AlignmentGroup />
        <NumberGroup />
        <StylesGroup />
        <CellsGroup />
        <EditingGroup />
        <button aria-label="Collapse the ribbon" className="mt-20 mr-[10px] ml-auto">
          <Icon w={9} h={6}><path d="M.5 5l4-4 4 4" stroke="#666" strokeWidth="2" /></Icon>
        </button>
      </div>
      <FormulaBar />
      <Sheet />
      <SheetTabs />
      <StatusBar />
      <Taskbar />
      <RecorderBar />
    </div>
  );
}
